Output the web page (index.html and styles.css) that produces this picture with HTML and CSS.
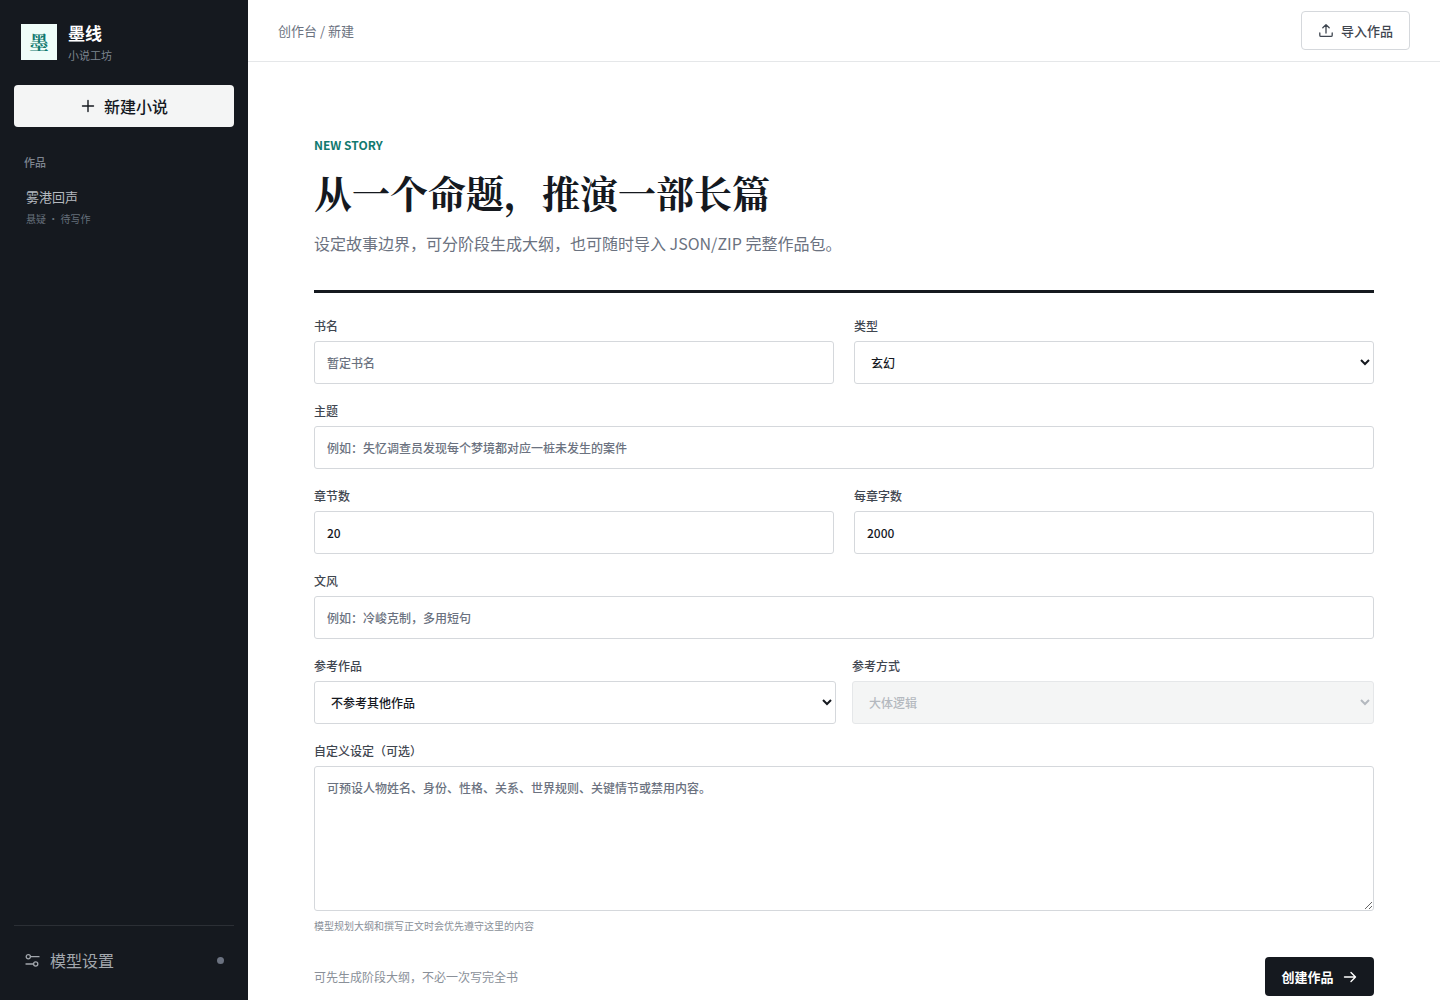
FILE: index.html
```html
<!DOCTYPE html>
<html lang="zh-CN">
<head>
    <meta charset="UTF-8">
    <meta name="viewport" content="width=device-width, initial-scale=1.0">
    <title>墨线 - 新建</title>
    <link rel="stylesheet" href="styles.css">
</head>
<body>
    <aside class="sidebar">
        <div class="brand">
            <div class="brand-logo">墨</div>
            <div class="brand-text">
                <div class="brand-name">墨线</div>
                <div class="brand-sub">小说工坊</div>
            </div>
        </div>
        <button class="new-button">
            <svg width="16" height="16" viewBox="0 0 16 16" fill="none" stroke="currentColor" stroke-width="1.4" stroke-linecap="round"><path d="M8 2.500v11M2.500 8h11"/></svg>
            <span>新建小说</span>
        </button>
        <div class="side-label">作品</div>
        <div class="work">
            <div class="work-title">雾港回声</div>
            <div class="work-meta">悬疑 · 待写作</div>
        </div>
        <div class="side-footer">
            <svg width="16" height="16" viewBox="0 0 16 16" fill="none" stroke="currentColor" stroke-width="1.3" stroke-linecap="round"><circle cx="4.300" cy="3.700" r="2.100"/><path d="M6.800 3.700H15"/><circle cx="11.700" cy="11" r="2.100"/><path d="M2 11h7.200"/></svg>
            <span class="footer-text">模型设置</span>
            <span class="status-dot"></span>
        </div>
    </aside>
    <div class="main">
        <header class="topbar">
            <div class="crumbs">创作台 / 新建</div>
            <button class="import-button">
                <svg width="16" height="16" viewBox="0 0 16 16" fill="none" stroke="currentColor" stroke-width="1.3" stroke-linecap="round" stroke-linejoin="round"><path d="M8 11V2.800M4.800 5.800 8 2.600l3.200 3.200M1.800 11v2.200c0 .7.500 1.200 1.200 1.200h10c.7 0 1.200-.5 1.200-1.200V11"/></svg>
                <span>导入作品</span>
            </button>
        </header>
        <main class="page">
            <div class="eyebrow">NEW STORY</div>
            <h1>从一个命题，推演一部长篇</h1>
            <p class="lead">设定故事边界，可分阶段生成大纲，也可随时导入 JSON/ZIP 完整作品包。</p>
            <form class="story-form">
                <div class="row two">
                    <div class="field">
                        <label>书名</label>
                        <input type="text" placeholder="暂定书名">
                    </div>
                    <div class="field">
                        <label>类型</label>
                        <select><option>玄幻</option></select>
                    </div>
                </div>
                <div class="field">
                    <label>主题</label>
                    <input type="text" placeholder="例如：失忆调查员发现每个梦境都对应一桩未发生的案件">
                </div>
                <div class="row two">
                    <div class="field">
                        <label>章节数</label>
                        <input type="number" value="20">
                    </div>
                    <div class="field">
                        <label>每章字数</label>
                        <input type="number" value="2000">
                    </div>
                </div>
                <div class="field">
                    <label>文风</label>
                    <input type="text" placeholder="例如：冷峻克制，多用短句">
                </div>
                <div class="row ref">
                    <div class="field">
                        <label>参考作品</label>
                        <select><option>不参考其他作品</option></select>
                    </div>
                    <div class="field">
                        <label>参考方式</label>
                        <select disabled><option>大体逻辑</option></select>
                    </div>
                </div>
                <div class="field">
                    <label>自定义设定（可选）</label>
                    <textarea placeholder="可预设人物姓名、身份、性格、关系、世界规则、关键情节或禁用内容。"></textarea>
                    <div class="hint">模型规划大纲和撰写正文时会优先遵守这里的内容</div>
                </div>
                <div class="form-footer">
                    <span class="footer-note">可先生成阶段大纲，不必一次写完全书</span>
                    <button type="button" class="create-button">
                        <span>创建作品</span>
                        <svg width="16" height="16" viewBox="0 0 16 16" fill="none" stroke="currentColor" stroke-width="1.4" stroke-linecap="round" stroke-linejoin="round"><path d="M2.500 8h11M9 3.500 13.500 8 9 12.500"/></svg>
                    </button>
                </div>
            </form>
        </main>
    </div>
</body>
</html>
```

FILE: styles.css
```css
* {
    margin: 0;
    padding: 0;
    box-sizing: border-box;
}

html, body {
    height: 100%;
    overflow: hidden;
}

body {
    display: flex;
    background-color: #ffffff;
    color: #15191f;
    font-family: "Noto Sans CJK SC", "Noto Sans", sans-serif;
}

/* sidebar */
.sidebar {
    width: 248px;
    flex-shrink: 0;
    height: 100vh;
    background-color: #15191f;
    padding: 24px 14px 0;
    display: flex;
    flex-direction: column;
}

.brand {
    height: 36px;
    display: flex;
    align-items: flex-start;
    gap: 11px;
    padding-left: 7px;
}

.brand-logo {
    width: 36px;
    height: 36px;
    background-color: #effdf9;
    color: #11796f;
    font-family: "Noto Serif CJK SC", serif;
    font-size: 19px;
    font-weight: 700;
    line-height: 36px;
    text-align: center;
}

.brand-text {
    margin-top: -1px;
}

.brand-name {
    font-size: 17px;
    font-weight: 700;
    line-height: 20px;
    color: #ffffff;
}

.brand-sub {
    font-size: 11px;
    line-height: 16px;
    margin-top: 4px;
    color: #7d8590;
}

.new-button {
    margin-top: 25px;
    height: 42px;
    border: none;
    border-radius: 4px;
    background-color: #f4f5f5;
    color: #15191f;
    font-family: inherit;
    font-size: 16px;
    font-weight: 500;
    display: flex;
    align-items: center;
    justify-content: center;
    gap: 8px;
}

.side-label {
    margin-top: 27px;
    padding-left: 10px;
    font-size: 11px;
    font-weight: 500;
    line-height: 16px;
    color: #7d8590;
}

.work {
    margin-top: 17px;
    padding-left: 12px;
}

.work-title {
    font-size: 13px;
    line-height: 20px;
    color: #b4b9bf;
}

.work-meta {
    margin-top: 5px;
    font-size: 10px;
    line-height: 14px;
    color: #66707b;
}

.side-footer {
    margin-top: auto;
    height: 75px;
    border-top: 1px solid #2b2f35;
    padding: 0 10px 5px;
    display: flex;
    align-items: center;
    gap: 10px;
    color: #a2a7ad;
}

.footer-text {
    font-size: 16px;
    flex: 1;
    margin-top: -2px;
}

.status-dot {
    width: 7px;
    height: 7px;
    border-radius: 50%;
    background-color: #6b7280;
}

/* main */
.main {
    flex: 1;
    min-width: 0;
    height: 100vh;
    overflow: hidden;
}

.topbar {
    height: 62px;
    border-bottom: 1px solid #e5e7e9;
    padding: 0 30px 1px;
    display: flex;
    align-items: center;
    justify-content: space-between;
}

.crumbs {
    font-size: 13px;
    color: #6b7280;
}

.import-button {
    width: 109px;
    height: 39px;
    border: 1px solid #d5d8dc;
    border-radius: 4px;
    background-color: #ffffff;
    color: #3f4650;
    font-family: inherit;
    font-size: 13px;
    font-weight: 500;
    display: flex;
    align-items: center;
    justify-content: center;
    gap: 7px;
}

.page {
    width: 1060px;
    margin: 0 auto;
    padding-top: 74px;
}

.eyebrow {
    font-size: 12px;
    font-weight: 700;
    line-height: 18px;
    color: #11796f;
}

h1 {
    margin-top: 12px;
    font-family: "Noto Serif CJK SC", "Noto Sans CJK SC", serif;
    font-size: 38px;
    font-weight: 700;
    line-height: 52px;
    color: #15191f;
}

.lead {
    margin-top: 13px;
    font-size: 16px;
    line-height: 24px;
    color: #6b7280;
}

.story-form {
    margin-top: 35px;
    border-top: 3px solid #15191f;
    padding-top: 25px;
    display: flex;
    flex-direction: column;
    gap: 19px;
}

.row {
    display: grid;
    grid-template-columns: 1fr 1fr;
    gap: 20px;
}

.row.ref {
    gap: 16px;
}

.field label {
    display: block;
    font-size: 12px;
    font-weight: 500;
    line-height: 16px;
    margin-bottom: 7px;
    color: #3f4650;
}

input, select, textarea {
    display: block;
    width: 100%;
    height: 43px;
    border: 1px solid #d5d8dc;
    border-radius: 3px;
    background-color: #ffffff;
    padding: 0 12px;
    font-family: inherit;
    font-size: 12px;
    font-weight: 500;
    color: #15191f;
}

input::placeholder, textarea::placeholder {
    color: #6b7280;
    opacity: 1;
}

select:disabled {
    background-color: #f4f5f5;
    border-color: #e5e7e9;
    color: #b4b9bf;
    opacity: 1;
}

textarea {
    height: 145px;
    padding: 11px 12px;
    line-height: 20px;
}

.hint {
    margin-top: 8px;
    font-size: 10px;
    line-height: 14px;
    color: #8a9099;
}

.form-footer {
    margin-top: 5px;
    display: flex;
    align-items: center;
    justify-content: space-between;
}

.footer-note {
    font-size: 12px;
    color: #8a9099;
}

.create-button {
    width: 109px;
    height: 39px;
    border: none;
    border-radius: 4px;
    background-color: #15191f;
    color: #ffffff;
    font-family: inherit;
    font-size: 13px;
    font-weight: 700;
    display: flex;
    align-items: center;
    justify-content: center;
    gap: 8px;
}
```
